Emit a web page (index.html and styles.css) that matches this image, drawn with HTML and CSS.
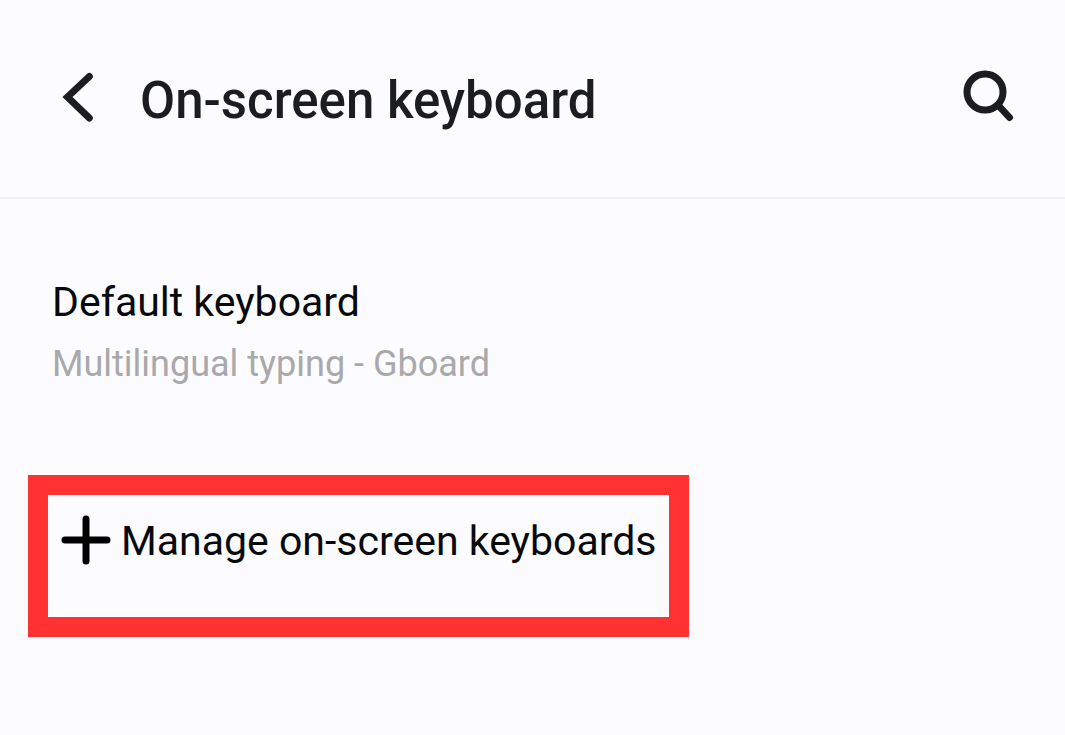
FILE: index.html
```html
<!DOCTYPE html>
<html lang="en">
<head>
<meta charset="utf-8">
<meta name="viewport" content="width=device-width, initial-scale=1">
<title>On-screen keyboard</title>
<link rel="stylesheet" href="styles.css">
</head>
<body>
<header class="bar">
  <button class="icon-button" type="button" aria-label="Back">
    <svg class="back-icon" viewBox="0 0 32 52"><path d="M27.300 6.500 5.500 27 27.300 48"/></svg>
  </button>
  <h1 class="title">On-screen keyboard</h1>
  <button class="icon-button" type="button" aria-label="Search">
    <svg class="search-icon" viewBox="0 0 52 52"><circle cx="22" cy="22" r="18"/><path d="M35 35 46.500 47.500"/></svg>
  </button>
</header>
<main class="settings">
  <button class="setting" type="button">
    <span class="setting-name">Default keyboard</span>
    <span class="setting-value">Multilingual typing - Gboard</span>
  </button>
  <button class="manage" type="button">
    <svg class="plus-icon" viewBox="0 0 50 50"><path d="M25 4V46M4 25H46"/></svg>
    <span>Manage on-screen keyboards</span>
  </button>
</main>
</body>
</html>
```
FILE: styles.css
```css
* {
  box-sizing: border-box;
}

body {
  margin: 0;
  min-height: 100vh;
  background: #fcfcff;
  color: #08090b;
  font-family: Roboto, "Liberation Sans", sans-serif;
}

button {
  margin: 0;
  padding: 0;
  border: 0;
  background: none;
  color: inherit;
  font: inherit;
  text-align: left;
  cursor: pointer;
}

svg {
  display: block;
  fill: none;
  stroke: currentColor;
  stroke-width: 7;
  stroke-linecap: round;
}

.bar {
  display: flex;
  align-items: flex-start;
  padding: 70px 50px 65px 62px;
  border-bottom: 2px solid #f0f0f2;
  color: #1c1d21;
}

.back-icon {
  width: 32px;
  height: 52px;
}

.title {
  flex: 1;
  margin: 0 0 0 46px;
  font-size: 51px;
  font-weight: 500;
  line-height: 62px;
}

.search-icon {
  width: 52px;
  height: 52px;
}

.settings {
  display: flex;
  flex-direction: column;
  align-items: flex-start;
  padding: 72px 28px 40px;
}

.setting {
  display: flex;
  flex-direction: column;
  padding: 0 24px;
}

.setting-name {
  font-size: 41px;
  line-height: 62px;
}

.setting-value {
  color: #a9a9ac;
  font-size: 36px;
  line-height: 62px;
}

.manage {
  display: flex;
  gap: 10px;
  margin-top: 80px;
  padding: 18px 12px 48px 13px;
  border: 20px solid #ff3131;
  font-size: 41px;
  line-height: 56px;
}

.plus-icon {
  width: 50px;
  height: 54px;
  color: #000;
}
```
